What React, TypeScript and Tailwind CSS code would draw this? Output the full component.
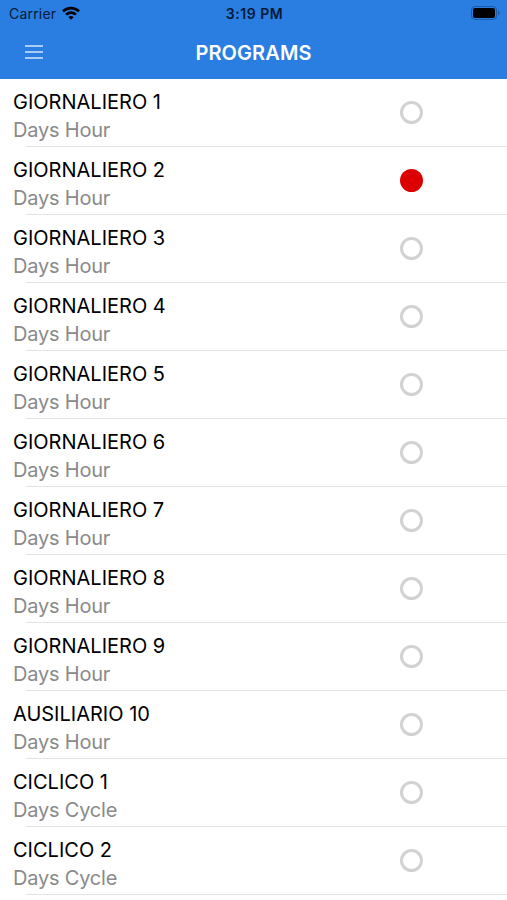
import { clsx } from 'clsx'

interface Program {
  name: string
  schedule: string
  active?: boolean
}

const programs: Program[] = [
  { name: 'GIORNALIERO 1', schedule: 'Days Hour' },
  { name: 'GIORNALIERO 2', schedule: 'Days Hour', active: true },
  { name: 'GIORNALIERO 3', schedule: 'Days Hour' },
  { name: 'GIORNALIERO 4', schedule: 'Days Hour' },
  { name: 'GIORNALIERO 5', schedule: 'Days Hour' },
  { name: 'GIORNALIERO 6', schedule: 'Days Hour' },
  { name: 'GIORNALIERO 7', schedule: 'Days Hour' },
  { name: 'GIORNALIERO 8', schedule: 'Days Hour' },
  { name: 'GIORNALIERO 9', schedule: 'Days Hour' },
  { name: 'AUSILIARIO 10', schedule: 'Days Hour' },
  { name: 'CICLICO 1', schedule: 'Days Cycle' },
  { name: 'CICLICO 2', schedule: 'Days Cycle' }
]

function StatusBar() {
  return (
    <div className="grid h-[27px] grid-cols-[1fr_auto_1fr] items-center pr-[7px] pl-[9px] text-[#061a38]">
      <div className="flex items-center gap-[6px]">
        <span className="text-[14px] leading-none tracking-[0.2px]">Carrier</span>
        <svg className="mb-px" width="18" height="14" viewBox="0 0 18 14" fill="none" stroke="#000" strokeWidth="2.6">
          <path d="M1 5.4a11.4 11.4 0 0 1 16 0" />
          <path d="M4.1 8.6a7 7 0 0 1 9.8 0" />
          <path d="M9 13.8 6.4 11.2a3.7 3.7 0 0 1 5.2 0z" fill="#000" stroke="none" />
        </svg>
      </div>
      <span className="text-[14px] leading-none font-semibold tracking-[0.55px]">3:19 PM</span>
      <svg className="mb-px justify-self-end" width="29" height="14" viewBox="0 0 29 14" fill="none">
        <rect x="0.5" y="0.5" width="25" height="13" rx="3.5" stroke="#1b5aa8" />
        <rect x="2" y="2" width="22" height="10" rx="2" fill="#000" />
        <path d="M27 4.5c2 .8 2 4.2 0 5z" fill="#1b5aa8" />
      </svg>
    </div>
  )
}

function NavBar() {
  return (
    <div className="grid h-[51px] grid-cols-[1fr_auto_1fr] items-center">
      <button type="button" aria-label="Menu" className="ml-[25px] w-[18px]">
        <svg className="block" width="18" height="15" viewBox="0 0 18 15" stroke="#a6ccf7" strokeWidth="2">
          <path d="M0 1h18M0 7h18M0 13h18" />
        </svg>
      </button>
      <h1 className="text-[20px] font-semibold tracking-[0.1px] text-white">PROGRAMS</h1>
    </div>
  )
}

function ProgramRow({ name, schedule, active }: Program) {
  return (
    <li className="flex h-[68px] flex-col">
      <div className="flex flex-1 items-center justify-between pr-[84px] pl-[13px]">
        <div className="pt-[6px]">
          <p className="text-[20px] leading-[29px] text-black">{name}</p>
          <p className="text-[20px] leading-[27px] tracking-[-0.2px] text-[#8a8a8a]">{schedule}</p>
        </div>
        <span
          className={clsx(
            'size-[23px] rounded-full',
            active ? 'bg-[#dc0000]' : 'border-[3px] border-[#d2d2d2]'
          )}
        />
      </div>
      <div className="ml-[26px] h-px bg-[#e4e4e4]" />
    </li>
  )
}

export default function App() {
  return (
    <div className="h-[900px] w-[507px] overflow-hidden bg-white font-['Inter',sans-serif]">
      <header className="h-[79px] bg-[#2a7de1]">
        <StatusBar />
        <NavBar />
      </header>
      <ul>
        {programs.map((program) => (
          <ProgramRow key={program.name} {...program} />
        ))}
      </ul>
    </div>
  )
}
